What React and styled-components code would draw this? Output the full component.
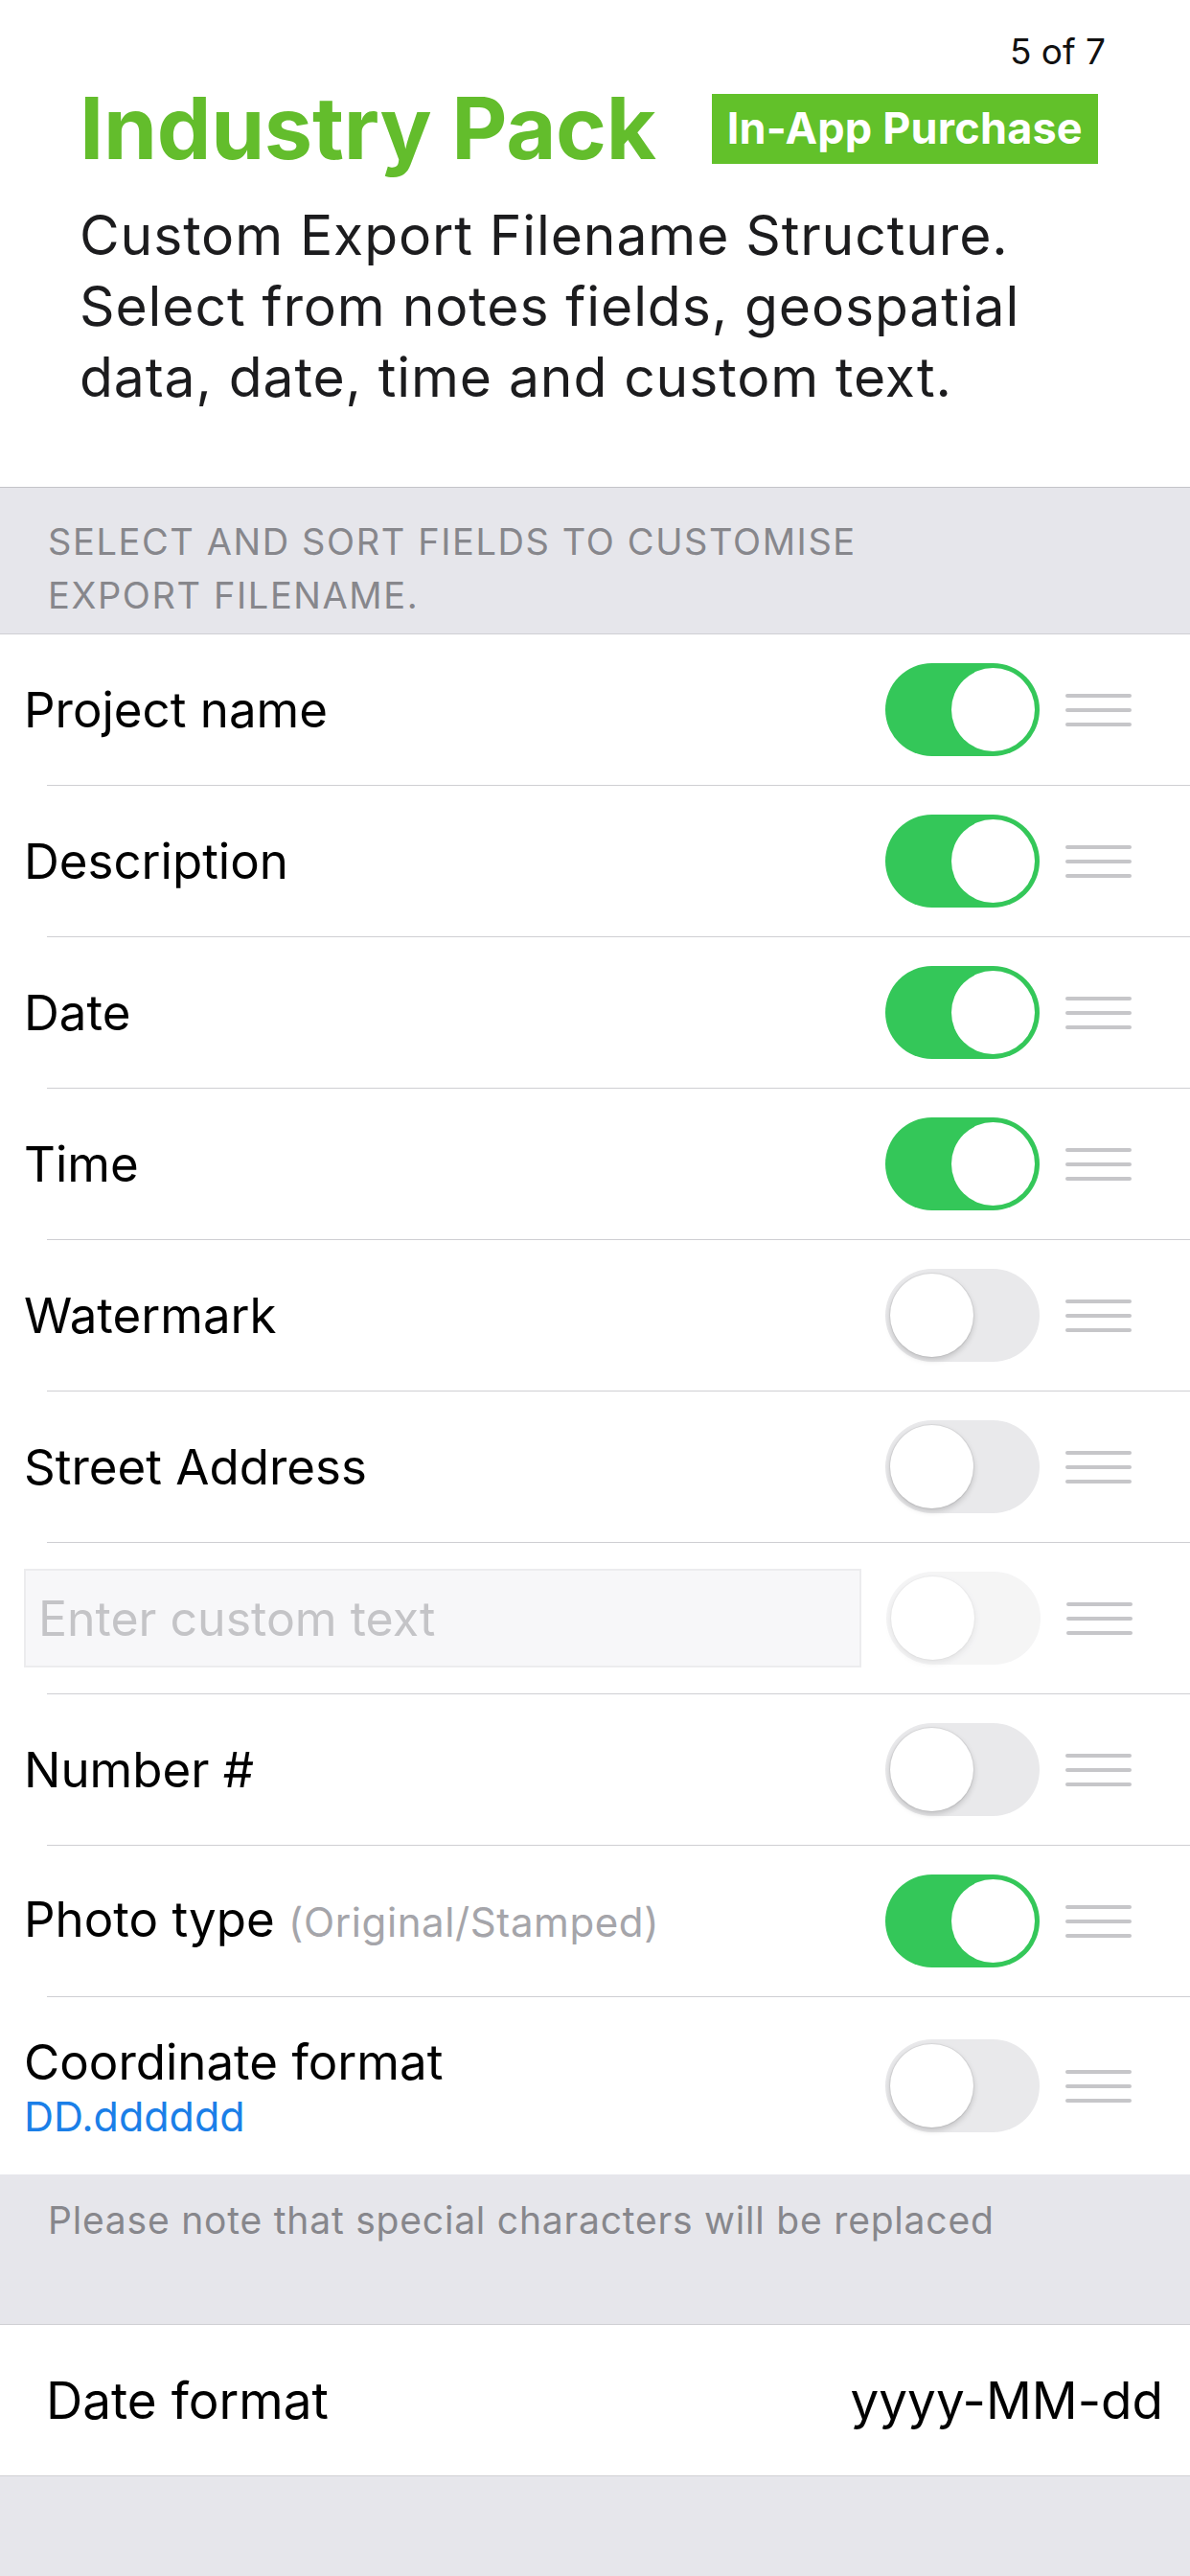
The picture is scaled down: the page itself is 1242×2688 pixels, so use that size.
import React from 'react';
import styled, { createGlobalStyle } from 'styled-components';

const GlobalStyle = createGlobalStyle`
    html, body {
        margin: 0;
        padding: 0;
        background: #e6e6eb;
    }
    body {
        font-family: Inter, "Liberation Sans", sans-serif;
        -webkit-font-smoothing: antialiased;
    }
    #root {
        min-height: 2688px;
    }
`;

const Page = styled.div`
    width: 1242px;
    min-height: 2688px;
    background: #e6e6eb;
`;

const Intro = styled.header`
    background: #fff;
    padding: 30px 88px 0 83px;
    height: 509px;
    box-sizing: border-box;
    border-bottom: 1px solid #c4c4c8;
`;

const Counter = styled.div`
    text-align: right;
    font-size: 37px;
    color: #111;
    line-height: 48px;
`;

const TitleRow = styled.div`
    display: flex;
    align-items: center;
    gap: 58px;
    margin-top: 6px;
`;

const Title = styled.h1`
    margin: 0;
    font-size: 90px;
    font-weight: 700;
    color: #63bd2c;
    letter-spacing: -0.3px;
    line-height: 100px;
`;

const Badge = styled.span`
    background: #62c12a;
    color: #fff;
    font-weight: 700;
    font-size: 45px;
    padding: 12px 16px 14px;
    line-height: 47px;
    letter-spacing: 0.2px;
`;

const Description = styled.p`
    margin: 25px 0 0;
    font-size: 57px;
    line-height: 74px;
    color: #1c1c1e;
    letter-spacing: 0.9px;
    white-space: nowrap;
`;

const SectionHeader = styled.div`
    padding: ${p => p.$pad || '20px 50px 0'};
    height: ${p => p.$height}px;
    box-sizing: border-box;
    font-size: ${p => p.$upper ? 38 : 39}px;
    line-height: 56px;
    color: #87878c;
    text-transform: ${p => p.$upper ? 'uppercase' : 'none'};
    letter-spacing: ${p => p.$upper ? '1.6px' : '0.8px'};
    border-bottom: 1px solid #cfcfd3;
    white-space: nowrap;
`;

const List = styled.div`
    background: #fff;
`;

const Row = styled.div`
    display: flex;
    align-items: center;
    height: ${p => p.$height || 157}px;
    padding: 0 61px 0 25px;
    box-sizing: border-box;
`;

const Separator = styled.div`
    height: 1px;
    margin-left: 49px;
    background: #cfcfd3;
`;

const LabelBlock = styled.div`
    flex: 1;
    display: flex;
    flex-direction: column;
`;

const Label = styled.span`
    font-size: 51px;
    color: #000;
    line-height: 62px;
`;

const Hint = styled.span`
    font-size: 42px;
    letter-spacing: 0.6px;
    color: #a5a5aa;
`;

const SubValue = styled.span`
    font-size: 43px;
    color: #1b7fe8;
    line-height: 50px;
`;

const TextField = styled.div`
    flex: 0 0 874px;
    height: 103px;
    margin-right: 26px;
    box-sizing: border-box;
    background: #f7f7f9;
    border: 2px solid #ececee;
    display: flex;
    align-items: center;
    padding-left: 13px;
    font-size: 50px;
    color: #c4c4c7;
`;

const Track = styled.div`
    width: 161px;
    height: 97px;
    border-radius: 49px;
    box-sizing: border-box;
    padding: 5px;
    display: flex;
    justify-content: ${p => p.$on ? 'flex-end' : 'flex-start'};
    align-items: center;
    background: ${p => p.$on ? '#34c759' : '#e9e9eb'};
    opacity: ${p => p.$faded ? 0.45 : 1};
    flex-shrink: 0;
`;

const Knob = styled.div`
    width: 87px;
    height: 87px;
    border-radius: 50%;
    background: #fff;
    box-shadow: ${p => p.$on ? 'none' : '0 3px 6px rgba(0,0,0,0.18), 0 0 0 1px rgba(0,0,0,0.06)'};
`;

const Toggle = ({ on, faded }) => (
    <Track $on={on} $faded={faded}>
        <Knob $on={on} />
    </Track>
);

const Handle = styled.div`
    width: 69px;
    margin-left: 27px;
    display: flex;
    flex-direction: column;
    gap: 11px;
    flex-shrink: 0;

    span {
        display: block;
        height: 4px;
        border-radius: 2px;
        background: #c6c6c9;
    }
`;

const DragHandle = () => <Handle><span /><span /><span /></Handle>;

const ValueRow = styled.div`
    display: flex;
    align-items: center;
    justify-content: space-between;
    height: 157px;
    padding: 0 28px 0 48px;
    background: #fff;
    border-bottom: 1px solid #cfcfd3;
    font-size: 53px;
    color: #000;
`;

const fields = [
    { label: 'Project name', on: true },
    { label: 'Description', on: true },
    { label: 'Date', on: true },
    { label: 'Time', on: true },
    { label: 'Watermark', on: false },
    { label: 'Street Address', on: false },
    { custom: true, on: false },
    { label: 'Number #', on: false },
    { label: 'Photo type', hint: '(Original/Stamped)', on: true },
    { label: 'Coordinate format', sub: 'DD.dddddd', on: false, height: 185 },
];

const App = () => {
    return (
        <Page>
            <GlobalStyle />
            <Intro>
                <Counter>5 of 7</Counter>
                <TitleRow>
                    <Title>Industry Pack</Title>
                    <Badge>In-App Purchase</Badge>
                </TitleRow>
                <Description>
                    Custom Export Filename Structure.<br />
                    Select from notes fields, geospatial<br />
                    data, date, time and custom text.
                </Description>
            </Intro>

            <SectionHeader $upper $height={153} $pad="28px 50px 0">
                Select and sort fields to customise<br />export filename.
            </SectionHeader>

            <List>
                {fields.map((f, i) => (
                    <React.Fragment key={i}>
                        {i > 0 && <Separator />}
                        <Row $height={f.height}>
                            {f.custom ? (
                                <TextField>Enter custom text</TextField>
                            ) : (
                                <LabelBlock>
                                    <Label>
                                        {f.label}{f.hint && <> <Hint>{f.hint}</Hint></>}
                                    </Label>
                                    {f.sub && <SubValue>{f.sub}</SubValue>}
                                </LabelBlock>
                            )}
                            <Toggle on={f.on} faded={f.custom} />
                            <DragHandle />
                        </Row>
                    </React.Fragment>
                ))}
            </List>

            <SectionHeader $height={157} $pad="20px 50px 0">
                Please note that special characters will be replaced
            </SectionHeader>

            <ValueRow>
                <span>Date format</span>
                <span>yyyy-MM-dd</span>
            </ValueRow>
        </Page>
    );
};

export default App;
